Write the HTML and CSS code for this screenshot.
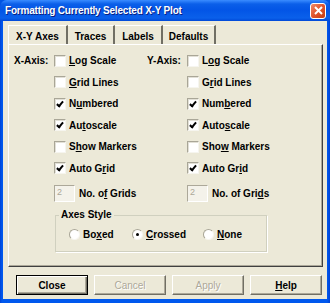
FILE: index.html
```html
<!DOCTYPE html>
<html lang="en">
<head>
    <meta charset="UTF-8">
    <title>Formatting Currently Selected X-Y Plot</title>
    <link rel="stylesheet" href="styles.css">
</head>
<body>
<div class="dialog">
    <div class="titlebar">
        <span class="title">Formatting Currently Selected X-Y Plot</span>
        <span class="close">
            <svg width="9" height="9" viewBox="0 0 9 9"><path d="M1 1 L8 8 M8 1 L1 8" stroke="#fff" stroke-width="2"/></svg>
        </span>
    </div>
    <div class="body">
        <div class="tabs">
            <div class="tab active">X-Y Axes</div>
            <div class="tab traces">Traces</div>
            <div class="tab labels">Labels</div>
            <div class="tab defaults">Defaults</div>
        </div>
        <div class="panel">
            <div class="axes">
                <div class="axis">
                    <div class="axis-label">X-Axis:</div>
                    <div class="options">
                        <div class="row"><span class="check"></span><span><u>L</u>og Scale</span></div>
                        <div class="row"><span class="check"></span><span><u>G</u>rid Lines</span></div>
                        <div class="row"><span class="check on"></span><span>N<u>u</u>mbered</span></div>
                        <div class="row"><span class="check on"></span><span>Au<u>t</u>oscale</span></div>
                        <div class="row"><span class="check"></span><span>S<u>h</u>ow Markers</span></div>
                        <div class="row"><span class="check on"></span><span>Auto G<u>r</u>id</span></div>
                        <div class="row grids"><span class="field">2</span><span>No. o<u>f</u> Grids</span></div>
                    </div>
                </div>
                <div class="axis">
                    <div class="axis-label">Y-Axis:</div>
                    <div class="options">
                        <div class="row"><span class="check"></span><span>L<u>o</u>g Scale</span></div>
                        <div class="row"><span class="check"></span><span>G<u>r</u>id Lines</span></div>
                        <div class="row"><span class="check on"></span><span>Num<u>b</u>ered</span></div>
                        <div class="row"><span class="check on"></span><span>Auto<u>s</u>cale</span></div>
                        <div class="row"><span class="check"></span><span>Sho<u>w</u> Markers</span></div>
                        <div class="row"><span class="check on"></span><span>Auto Gr<u>i</u>d</span></div>
                        <div class="row grids"><span class="field">2</span><span>No. of Gri<u>d</u>s</span></div>
                    </div>
                </div>
            </div>
            <fieldset class="group">
                <legend>Axes Style</legend>
                <div class="radio-row">
                    <span class="radio-item boxed"><span class="radio"></span><span>Bo<u>x</u>ed</span></span>
                    <span class="radio-item crossed"><span class="radio on"></span><span><u>C</u>rossed</span></span>
                    <span class="radio-item"><span class="radio"></span><span><u>N</u>one</span></span>
                </div>
            </fieldset>
        </div>
        <div class="buttons">
            <div class="btn default">Close</div>
            <div class="btn disabled">Cancel</div>
            <div class="btn disabled">Apply</div>
            <div class="btn"><span><u>H</u>elp</span></div>
        </div>
    </div>
</div>
</body>
</html>
```

FILE: styles.css
```css
* {
    margin: 0;
    padding: 0;
    box-sizing: border-box;
}

body {
    width: 330px;
    height: 303px;
    overflow: hidden;
    font-family: "Liberation Sans", Arial, sans-serif;
    font-weight: bold;
    font-size: 10px;
    color: #000;
    background: #0054e3;
}

u {
    text-decoration: underline;
    text-underline-offset: 1px;
}

.dialog {
    width: 330px;
    height: 303px;
    display: flex;
    flex-direction: column;
    background: linear-gradient(to right, #0042d6, #0058ee 2px, #0058ee 327px, #0042d6);
    border-radius: 7px 7px 0 0;
}

.titlebar {
    height: 21px;
    flex: none;
    display: flex;
    align-items: center;
    justify-content: space-between;
    padding: 0 4px 0 5px;
    border-radius: 7px 7px 0 0;
    background: linear-gradient(#3a8cff, #0b5fe9 4px, #0355e6 10px, #0a60ea 18px, #0048d8);
}

.title {
    color: #fff;
    font-size: 10px;
    letter-spacing: -0.2px;
    text-shadow: 1px 1px 0 #0a1f80;
}

.close {
    width: 16px;
    height: 16px;
    display: flex;
    align-items: center;
    justify-content: center;
    border: 1px solid #fff;
    border-radius: 3px;
    background: linear-gradient(135deg, #f08a6a, #e0552d 50%, #c43d14);
}

.body {
    flex: 1;
    margin: 0 3px 4px 3px;
    background: #ece9d8;
    display: flex;
    flex-direction: column;
}

.tabs {
    display: flex;
    margin: 4px 0 0 5px;
    height: 19px;
}

.tab {
    display: flex;
    align-items: center;
    justify-content: center;
    white-space: nowrap;
    padding-top: 2px;
    border-top: 1px solid #fff;
    border-right: 2px solid #716f64;
}

.tab.active {
    border-left: 1px solid #fff;
    width: 60px;
}

.tab.traces {
    width: 47px;
}

.tab.labels {
    width: 48px;
}

.tab.defaults {
    width: 53px;
}

.panel {
    width: 315px;
    height: 223px;
    margin-left: 5px;
    border-top: 1px solid #fff;
    border-left: 1px solid #fff;
    border-right: 1px solid #404040;
    border-bottom: 1px solid #404040;
    box-shadow: inset -1px -1px 0 #aca899;
    padding: 5px 0 0 5px;
}

.axes {
    display: flex;
}

.axis {
    display: flex;
    width: 133px;
}

.axis-label {
    width: 40px;
    height: 21.5px;
    display: flex;
    align-items: center;
}

.options {
    display: flex;
    flex-direction: column;
}

.row {
    height: 21.5px;
    display: flex;
    align-items: center;
    white-space: nowrap;
}

.row.grids {
    height: 26px;
    padding-top: 2px;
}

.check {
    width: 12px;
    height: 12px;
    margin-right: 3px;
    background: #fff;
    border-top: 1px solid #a9a697;
    border-left: 1px solid #a9a697;
    border-right: 1px solid #f6f5ef;
    border-bottom: 1px solid #f6f5ef;
    box-shadow: inset 1px 1px 0 #e2e0d6;
    position: relative;
}

.check.on::after {
    content: "";
    position: absolute;
    left: 3px;
    top: 1px;
    width: 2px;
    height: 5px;
    border-right: 2px solid #000;
    border-bottom: 2px solid #000;
    transform: rotate(40deg);
}

.field {
    width: 21px;
    height: 17px;
    margin-right: 4px;
    padding: 1px 0 0 2px;
    font-weight: normal;
    font-size: 9px;
    color: #aca899;
    background: #f4f2ea;
    border-top: 1px solid #aca899;
    border-left: 1px solid #aca899;
    border-right: 1px solid #fff;
    border-bottom: 1px solid #fff;
}

.group {
    width: 212px;
    height: 42px;
    margin: 5px 0 0 41px;
    border: 1px solid #d0d0bf;
    box-shadow: 1px 1px 0 #fff;
    padding: 0 0 0 13px;
}

.group legend {
    padding: 0 2px;
    margin-left: -10px;
    line-height: 10px;
}

.radio-row {
    display: flex;
    align-items: center;
    height: 27px;
    padding-top: 1px;
}

.radio-item {
    display: flex;
    align-items: center;
}

.radio-item.boxed {
    width: 63px;
}

.radio-item.crossed {
    width: 71px;
}

.radio {
    width: 11px;
    height: 11px;
    margin-right: 3px;
    border-radius: 50%;
    background: #fff;
    border-top: 1px solid #a9a697;
    border-left: 1px solid #a9a697;
    border-right: 1px solid #f6f5ef;
    border-bottom: 1px solid #f6f5ef;
    display: flex;
    align-items: center;
    justify-content: center;
}

.radio.on::after {
    content: "";
    width: 3px;
    height: 3px;
    border-radius: 50%;
    background: #000;
}

.buttons {
    display: flex;
    gap: 6px;
    margin: 8px 0 0 13px;
}

.btn {
    width: 72px;
    height: 20px;
    display: flex;
    align-items: center;
    justify-content: center;
    border-top: 1px solid #fff;
    border-left: 1px solid #fff;
    border-right: 1px solid #716f64;
    border-bottom: 1px solid #716f64;
    box-shadow: inset -1px -1px 0 #aca899;
}

.btn.default {
    border: 1px solid #000;
    box-shadow: inset 1px 1px 0 #fff, inset -1px -1px 0 #716f64, inset -2px -2px 0 #aca899;
}

.btn.disabled {
    color: #aca899;
    font-weight: normal;
    text-shadow: 1px 1px 0 #fff;
}
```
